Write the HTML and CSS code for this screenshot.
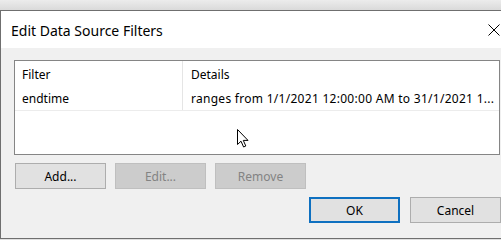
FILE: index.html
```html
<!DOCTYPE html>
<html>
<head>
<meta charset="utf-8">
<link rel="stylesheet" href="styles.css">
</head>
<body>
<div class="window">
  <div class="titlebar">
    <span class="title">Edit Data Source Filters</span>
    <svg class="close" width="12" height="12" viewBox="0 0 12 12"><path d="M0.5 0.5 L11.5 11.5 M11.5 0.5 L0.5 11.5" stroke="#000" stroke-width="1" fill="none"/></svg>
  </div>
  <div class="client">
    <div class="listbox">
      <div class="row header">
        <div class="cell c1">Filter</div>
        <div class="cell c2">Details</div>
      </div>
      <div class="row data">
        <div class="cell c1">endtime</div>
        <div class="cell c2 wide">ranges from 1/1/2021 12:00:00 AM to 31/1/2021 1...</div>
      </div>
      <svg class="cursor" width="13" height="19" viewBox="0 0 13 19"><path d="M0.5 0.5 L0.5 15.5 L4 12.2 L6.6 18 L8.8 17 L6.3 11.4 L11 11.4 Z" fill="#fff" stroke="#000" stroke-width="1" stroke-linejoin="miter"/></svg>
    </div>
    <div class="btnrow">
      <button class="btn">Add...</button>
      <button class="btn disabled">Edit...</button>
      <button class="btn disabled">Remove</button>
    </div>
    <div class="btnrow right">
      <button class="btn default">OK</button>
      <button class="btn">Cancel</button>
    </div>
  </div>
</div>
</body>
</html>
```
FILE: styles.css
```css
html, body {
  margin: 0;
  padding: 0;
}
body {
  width: 501px;
  height: 240px;
  overflow: hidden;
  background: linear-gradient(#ececec, #dadada 10px, #e0e0e0);
  font-family: "Noto Sans", "Open Sans", sans-serif;
  position: relative;
}
.window {
  margin-top: 10px;
  width: 500px;
  height: 227px;
  border: 1px solid #6f6f6f;
  border-right: none;
  background: #f0f0f0;
  box-sizing: content-box;
  overflow: hidden;
}
.titlebar {
  height: 37px;
  background: #fff;
  display: flex;
  align-items: center;
  justify-content: space-between;
  padding-left: 10px;
  box-sizing: border-box;
  width: 500px;
}
.title {
  font-size: 14px;
  color: #000;
  margin-top: 1px;
}
.close {
  margin-right: 1px;
  margin-top: 1px;
}
.client {
  padding: 12px 0 0 13px;
}
.listbox {
  width: 486px;
  height: 95px;
  box-sizing: border-box;
  border: 1px solid #858585;
  background: #fff;
  position: relative;
  font-size: 12px;
}
.row {
  display: flex;
  color: #000;
}
.row.header {
  height: 25px;
}
.row.data {
  height: 24px;
  border-bottom: 1px solid #ececec;
}
.cell {
  display: flex;
  align-items: center;
  white-space: nowrap;
  overflow: hidden;
}
.c1 {
  width: 168px;
  box-sizing: border-box;
  padding-left: 7px;
  border-right: 1px solid #e5e5e5;
}
.c2 {
  padding-left: 8px;
}
.c2.wide {
  letter-spacing: 0.28px;
}
.header .cell {
  padding-top: 2px;
}
.cursor {
  position: absolute;
  left: 222px;
  top: 68px;
}
.btnrow {
  display: flex;
  gap: 9px;
  margin-top: 8px;
  padding-left: 1px;
}
.btnrow.right {
  width: 487px;
  justify-content: flex-end;
  gap: 10px;
  padding-left: 0;
}
.btn {
  width: 91px;
  height: 26px;
  box-sizing: border-box;
  border: 1px solid #adadad;
  background: #e1e1e1;
  font-family: "Noto Sans", "Open Sans", sans-serif;
  font-size: 12px;
  color: #000;
  padding: 0;
  margin: 0;
}
.btn.disabled {
  background: #cccccc;
  border-color: #bfbfbf;
  color: #838383;
}
.btn.default {
  border: 2px solid #0e70c0;
}
```
